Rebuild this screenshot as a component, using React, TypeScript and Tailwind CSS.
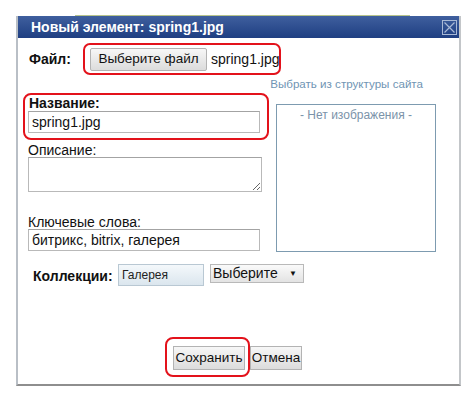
import React from 'react';

const FONT = { fontFamily: '"Liberation Sans", Arial, sans-serif' };

function CloseIcon() {
  return (
    <svg width="15" height="15" viewBox="0 0 15 15" className="block">
      <rect x="0.5" y="0.5" width="14" height="14" fill="none" stroke="#a9b9d6" />
      <path d="M2.5 2.5 L12.5 12.5 M12.5 2.5 L2.5 12.5" stroke="#a9b9d6" strokeWidth="1.2" />
    </svg>
  );
}

function TextInput({ value, className = '' }: { value: string; className?: string }) {
  return (
    <div
      className={`h-[22px] border border-[#b9b9b9] border-t-[#a3a3a3] bg-white flex items-center pl-[3px] text-[14px] text-[#111] whitespace-nowrap ${className}`}
    >
      {value}
    </div>
  );
}

export default function App() {
  return (
    <div className="relative w-[472px] h-[393px] bg-white overflow-hidden" style={FONT}>
      {/* faint strip of the page behind the dialog */}
      <div className="absolute left-[75px] top-[15px] w-[335px] h-px bg-[#b7c48c]" />

      <div className="ml-[16px] mt-[16px] w-[445px] h-[370px] border-l-2 border-r-2 border-b-2 border-l-[#b9bfc6] border-r-[#c3c6c9] border-b-[#8e8e8e] bg-white flex flex-col">
        {/* title bar */}
        <div className="h-[22px] bg-gradient-to-b from-[#3f5f9e] to-[#1f3f82] flex items-center justify-between pl-[13px] pr-[2px]">
          <span className="text-white font-bold text-[14px] leading-none">Новый элемент: spring1.jpg</span>
          <CloseIcon />
        </div>

        {/* file row */}
        <div className="flex items-center mt-[5px]">
          <span className="ml-[11px] w-[54px] shrink-0 font-bold text-[14px] text-[#111]">Файл:</span>
          <div className="h-[32px] w-[198px] shrink-0 border-2 border-[#e3121b] rounded-[7px] flex items-center pl-[5px] whitespace-nowrap">
            <div className="h-[23px] w-[117px] shrink-0 flex items-center justify-center border border-[#b3b3b3] rounded-[2px] bg-gradient-to-b from-[#f7f7f7] to-[#dcdcdc] text-[13.5px] text-[#111]">
              Выберите файл
            </div>
            <span className="ml-[4px] text-[14px] text-[#111]">spring1.jpg</span>
          </div>
        </div>

        <div className="h-[18px] flex items-center justify-end pr-[36px] text-[11.6px] text-[#7095b4] whitespace-nowrap">
          Выбрать из структуры сайта
        </div>

        {/* fields + preview */}
        <div className="flex items-start">
          <div className="ml-[5px] w-[246px] flex flex-col">
            <div className="h-[47px] border-2 border-[#e3121b] rounded-[8px] pl-[3px] pt-px">
              <div className="pl-px text-[14px] leading-[15px] font-bold text-[#111]">Название:</div>
              <TextInput value="spring1.jpg" className="w-[232px]" />
            </div>
            <div className="ml-[5px] mt-[3px] text-[14px] leading-[14px] text-[#111]">Описание:</div>
            <textarea
              className="ml-[5px] w-[234px] h-[35px] border border-[#b9b9b9] border-t-[#a3a3a3] outline-none"
              defaultValue=""
            />
            <div className="ml-[5px] mt-[23px] text-[14px] leading-[14px] text-[#111]">Ключевые слова:</div>
            <TextInput value="битрикс, bitrix, галерея" className="ml-[5px] w-[232px]" />
          </div>

          <div className="ml-[7px] mt-[11px] w-[160px] h-[148px] border border-[#7d9bb0] flex justify-center pt-[1px]">
            <span className="text-[12px] text-[#7b93a9]">- Нет изображения -</span>
          </div>
        </div>

        {/* collections */}
        <div className="flex items-start mt-[12px] ml-[15px]">
          <span className="mt-[2px] w-[85px] font-bold text-[14px] text-[#111]">Коллекции:</span>
          <div className="w-[86px] h-[22px] border border-[#b9c8d3] bg-gradient-to-b from-[#f4f8fb] to-[#dbe6ee] flex items-center pl-[3px] text-[12px] text-[#222]">
            Галерея
          </div>
          <div className="ml-[6px] w-[94px] h-[19px] border border-[#b9b9b9] bg-gradient-to-b from-[#fafafa] to-[#e3e3e3] flex items-center justify-between pl-[2px] pr-[6px] text-[14px] text-[#111]">
            <span>Выберите</span>
            <span className="text-[8px] leading-none">▼</span>
          </div>
        </div>

        {/* buttons */}
        <div className="flex items-start ml-[147px] mt-[50px]">
          <div className="h-[40px] w-[85px] border-2 border-[#e3121b] rounded-[8px] pl-[6px] pt-[7px]">
            <div className="h-[24px] w-[72px] flex items-center justify-center border border-[#b3b3b3] bg-gradient-to-b from-[#f7f7f7] to-[#dcdcdc] text-[13.5px] text-[#111]">
              Сохранить
            </div>
          </div>
          <div className="mt-[9px] h-[24px] w-[52px] flex items-center justify-center border border-[#b3b3b3] bg-gradient-to-b from-[#f7f7f7] to-[#dcdcdc] text-[13.5px] text-[#111]">
            Отмена
          </div>
        </div>
      </div>
    </div>
  );
}
